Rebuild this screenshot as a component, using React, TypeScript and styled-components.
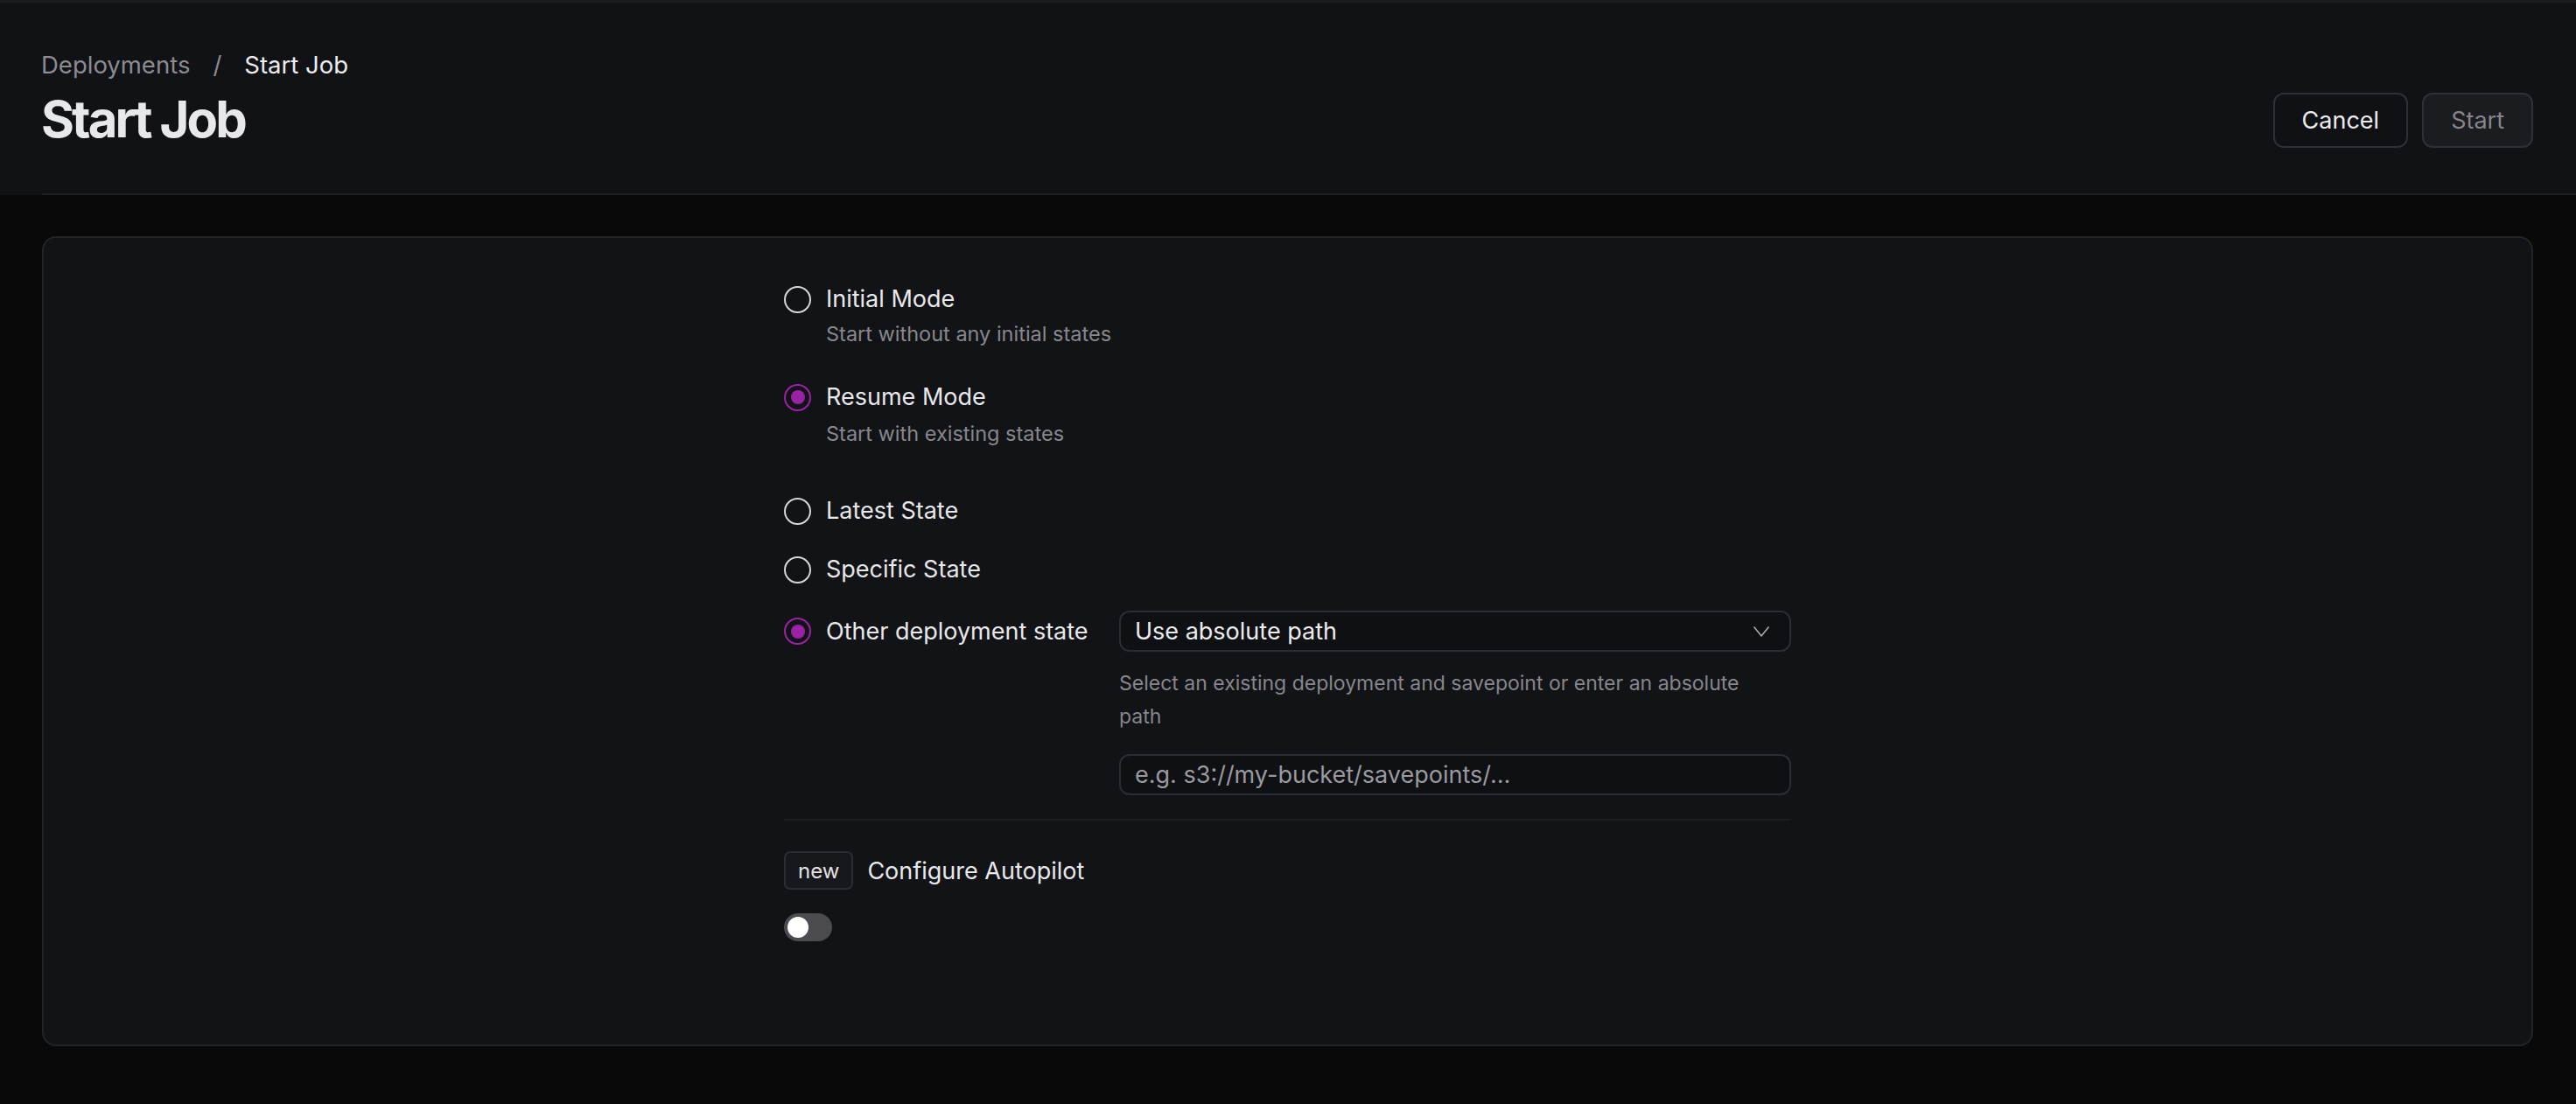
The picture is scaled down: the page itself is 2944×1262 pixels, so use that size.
import React from 'react';
import styled, { createGlobalStyle } from 'styled-components';

const GlobalStyle = createGlobalStyle`
  * { box-sizing: border-box; }
  body {
    margin: 0;
    background: #09090a;
    font-family: Inter, "Noto Sans", sans-serif;
    color: #e7e7e9;
  }
`;

const Page = styled.div`
  min-height: 100vh;
  display: flex;
  flex-direction: column;
`;

// Header
const Header = styled.header`
  background: #111216;
  border-top: 3px solid #1b1c20;
`;

const HeaderRow = styled.div`
  display: flex;
  justify-content: space-between;
  align-items: flex-end;
  padding: 54px 49px 50px 47px;
`;

const HeaderDivider = styled.div`
  height: 2px;
  margin-left: 48px;
  background: #1f2024;
`;

const TitleBlock = styled.div`
  display: flex;
  flex-direction: column;
  gap: 10px;
`;

const Breadcrumb = styled.nav`
  display: flex;
  gap: 26px;
  font-size: 27.5px;
  line-height: 34px;
`;

const Crumb = styled.span<{ $current?: boolean }>`
  color: ${(p) => (p.$current ? '#ececee' : '#8b8b90')};
`;

const Title = styled.h1`
  margin: 0;
  font-size: 58px;
  line-height: 70px;
  font-weight: 700;
  letter-spacing: -0.05em;
  color: #e8e8ea;
`;

const ButtonGroup = styled.div`
  display: flex;
  gap: 16px;
  margin-bottom: 2px;
`;

const Button = styled.button<{ $disabled?: boolean }>`
  height: 63px;
  padding: 0 31px;
  border-radius: 12px;
  border: 2px solid #2f3035;
  background: ${(p) => (p.$disabled ? '#1b1c20' : '#101115')};
  color: ${(p) => (p.$disabled ? '#85858a' : '#ececee')};
  font-family: Inter, sans-serif;
  font-size: 27px;
  cursor: ${(p) => (p.$disabled ? 'default' : 'pointer')};
`;

// Main card
const Main = styled.main`
  flex: 1;
  display: flex;
  padding: 47px 49px 66px 48px;
`;

const Card = styled.section`
  flex: 1;
  background: #121317;
  border: 2px solid #232428;
  border-radius: 16px;
  padding-top: 52px;
`;

const Form = styled.div`
  width: 1151px;
  margin: 0 auto;
  display: flex;
  flex-direction: column;
`;

const Block = styled.div<{ $top?: number }>`
  margin-top: ${(p) => p.$top ?? 0}px;
`;

const RadioRow = styled.label<{ $height?: number }>`
  display: flex;
  align-items: center;
  gap: 17px;
  height: ${(p) => p.$height ?? 36}px;
  font-size: 27px;
  line-height: 36px;
  color: #e8e8ea;
  cursor: pointer;
`;

const RadioCircle = styled.span<{ $checked?: boolean }>`
  width: 31px;
  height: 31px;
  flex-shrink: 0;
  border-radius: 50%;
  border: 2px solid ${(p) => (p.$checked ? '#9b22a6' : '#d6d6d8')};
  display: flex;
  align-items: center;
  justify-content: center;

  &::after {
    content: '';
    width: 16px;
    height: 16px;
    border-radius: 50%;
    background: #9b22a6;
    display: ${(p) => (p.$checked ? 'block' : 'none')};
  }
`;

const Description = styled.div<{ $top: number }>`
  margin: ${(p) => p.$top}px 0 0 48px;
  font-size: 23.5px;
  line-height: 32px;
  color: #87878c;
`;

const OtherRow = styled.div`
  display: grid;
  grid-template-columns: 383px 1fr;
`;

const SourceColumn = styled.div`
  display: flex;
  flex-direction: column;
`;

const Select = styled.div`
  height: 47px;
  display: flex;
  align-items: center;
  justify-content: space-between;
  padding: 0 22px 0 16px;
  border: 2px solid #2c2d32;
  border-radius: 12px;
  background: #0f1014;
  font-size: 27px;
  color: #ececee;
`;

const Helper = styled.p`
  margin: 17px 0 0;
  padding-right: 30px;
  font-size: 23px;
  line-height: 38px;
  color: #86868b;
`;

const PathInput = styled.input`
  margin-top: 24px;
  height: 47px;
  padding: 0 16px;
  border: 2px solid #2c2d32;
  border-radius: 12px;
  background: #0f1014;
  font-family: Inter, sans-serif;
  font-size: 27px;
  color: #ececee;
  outline: none;

  &::placeholder {
    color: #9a9a9f;
  }
`;

const Separator = styled.hr`
  margin: 27px 0 0;
  border: none;
  height: 2px;
  background: #1c1d21;
`;

const AutopilotRow = styled.div`
  margin-top: 35px;
  display: flex;
  align-items: center;
  gap: 16px;
  font-size: 27px;
  color: #e8e8ea;
`;

const Badge = styled.span`
  height: 44px;
  display: inline-flex;
  align-items: center;
  padding: 0 14px;
  border: 2px solid #2b2c31;
  border-radius: 7px;
  background: #17181c;
  font-size: 24px;
  color: #e2e2e4;
`;

const Toggle = styled.span<{ $on?: boolean }>`
  margin-top: 27px;
  width: 55px;
  height: 32px;
  border-radius: 16px;
  padding: 0 4px;
  display: flex;
  align-items: center;
  justify-content: ${(p) => (p.$on ? 'flex-end' : 'flex-start')};
  background: ${(p) => (p.$on ? '#9b22a6' : '#4b4b50')};

  &::after {
    content: '';
    width: 24px;
    height: 24px;
    border-radius: 50%;
    background: #ffffff;
  }
`;

const Chevron = () => (
  <svg width="20" height="14" viewBox="0 0 20 14" fill="none">
    <polyline points="1.5,1.5 10,12 18.5,1.5" stroke="#a9a9ad" strokeWidth="1.6" strokeLinejoin="round" />
  </svg>
);

const Radio: React.FC<{ label: string; checked?: boolean; height?: number }> = ({ label, checked, height }) => (
  <RadioRow $height={height}>
    <RadioCircle $checked={checked} />
    {label}
  </RadioRow>
);

const App: React.FC = () => {
  return (
    <Page>
      <GlobalStyle />
      <Header>
        <HeaderRow>
          <TitleBlock>
            <Breadcrumb>
              <Crumb>Deployments</Crumb>
              <Crumb>/</Crumb>
              <Crumb $current>Start Job</Crumb>
            </Breadcrumb>
            <Title>Start Job</Title>
          </TitleBlock>
          <ButtonGroup>
            <Button>Cancel</Button>
            <Button $disabled>Start</Button>
          </ButtonGroup>
        </HeaderRow>
        <HeaderDivider />
      </Header>

      <Main>
        <Card>
          <Form>
            <Block>
              <Radio label="Initial Mode" />
              <Description $top={6}>Start without any initial states</Description>
            </Block>
            <Block $top={38}>
              <Radio label="Resume Mode" checked />
              <Description $top={8}>Start with existing states</Description>
            </Block>

            <Block $top={54}>
              <Radio label="Latest State" />
            </Block>
            <Block $top={31}>
              <Radio label="Specific State" />
            </Block>
            <Block $top={29}>
              <OtherRow>
                <Radio label="Other deployment state" checked height={47} />
                <SourceColumn>
                  <Select>
                    Use absolute path
                    <Chevron />
                  </Select>
                  <Helper>Select an existing deployment and savepoint or enter an absolute path</Helper>
                  <PathInput placeholder="e.g. s3://my-bucket/savepoints/…" />
                </SourceColumn>
              </OtherRow>
            </Block>

            <Separator />
            <AutopilotRow>
              <Badge>new</Badge>
              Configure Autopilot
            </AutopilotRow>
            <Toggle />
          </Form>
        </Card>
      </Main>
    </Page>
  );
};

export default App;
